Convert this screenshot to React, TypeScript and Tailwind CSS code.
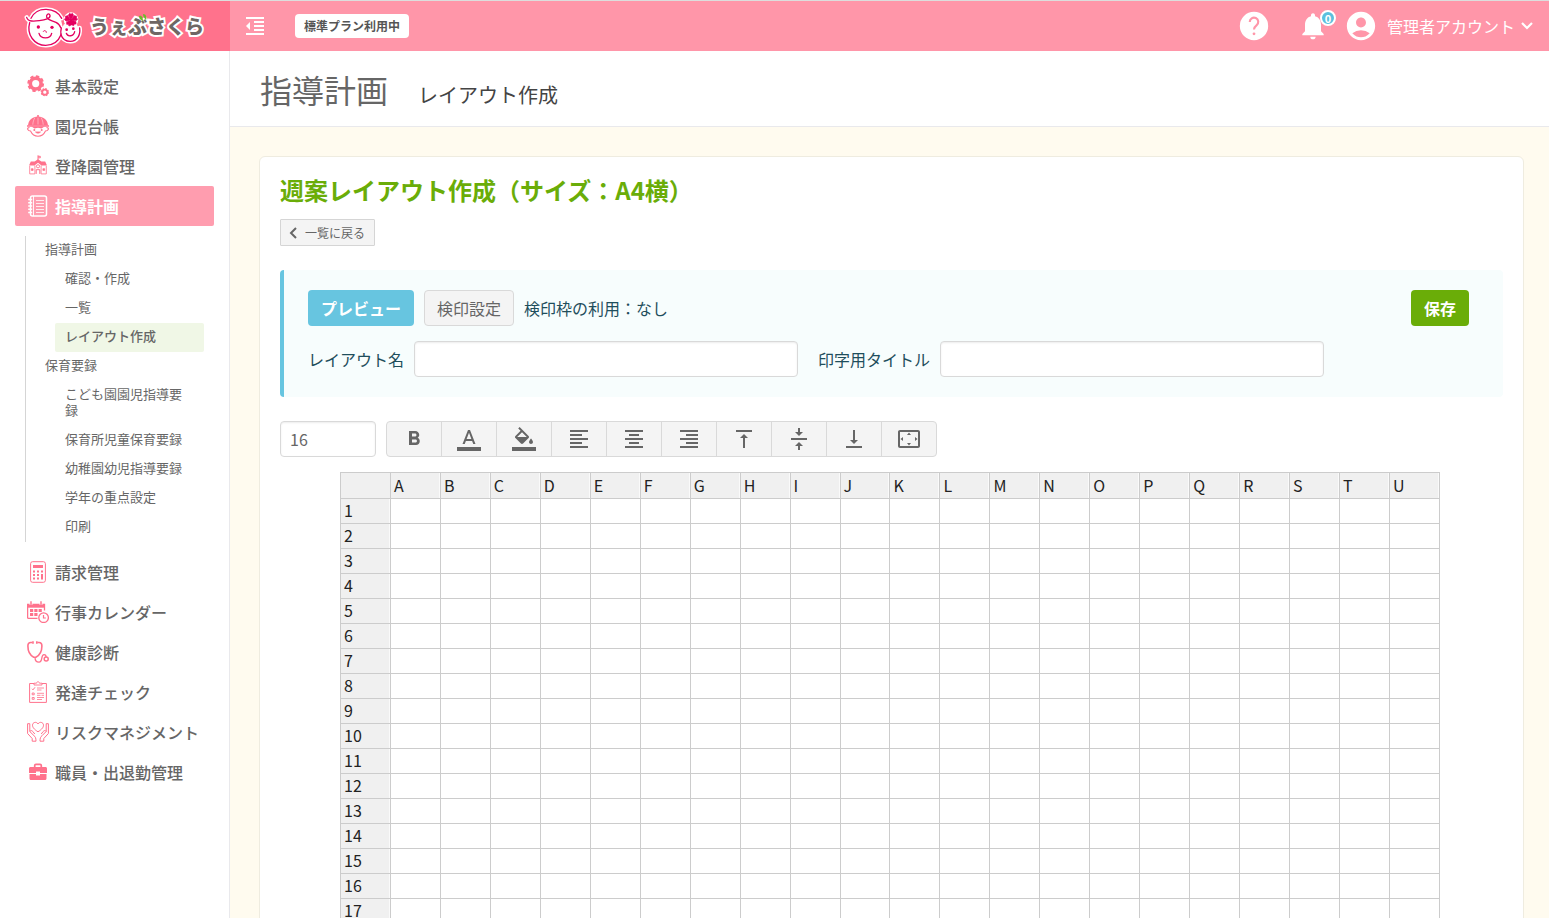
import { useState, type ReactNode } from 'react';
import {
  MdAccountCircle,
  MdFormatAlignCenter,
  MdFormatAlignLeft,
  MdFormatAlignRight,
  MdFormatBold,
  MdFormatIndentDecrease,
  MdNotifications,
  MdSettingsOverscan,
  MdVerticalAlignBottom,
  MdVerticalAlignCenter,
  MdVerticalAlignTop,
} from 'react-icons/md';

const COLUMNS = 'ABCDEFGHIJKLMNOPQRSTU'.split('');
const ROWS = Array.from({ length: 17 }, (_, i) => i + 1);

function MenuSvg({ children }: { children: ReactNode }) {
  return (
    <svg className="w-[22px] h-[22px] flex-shrink-0" viewBox="0 0 22 22" fill="none" stroke="currentColor" strokeWidth={1.3} aria-hidden="true">
      {children}
    </svg>
  );
}

const icons = {
  gears: (
    <MenuSvg>
      <circle cx="8.7" cy="8.6" r="5.4" strokeWidth="3.6" />
      <circle cx="8.7" cy="8.600" r="7.400" strokeWidth="2" strokeDasharray="3.300 2.511" />
      <circle cx="17.800" cy="17.200" r="2.600" strokeWidth="1.900" />
      <circle cx="17.800" cy="17.200" r="3.600" strokeWidth="1.100" strokeDasharray="1.600 1.230" />
    </MenuSvg>
  ),
  child: (
    <MenuSvg>
      <path d="M1 10.500C1.300 5 5.500 1.400 11 1.400s9.700 3.600 10 9.100z" fill="currentColor" stroke="none" />
      <path d="M11 0v2" strokeWidth="1.600" />
      <path d="M8 2.700c-1.500 2-2 4.500-2.200 7M14 2.700c1.500 2 2 4.500 2.200 7M11 2.500v7" stroke="#fff" strokeOpacity=".6" strokeWidth=".7" />
      <path d="M0 11h22" strokeWidth="1.500" />
      <path d="M2.500 12.500C.8 12.500.3 13.500.8 14.500c.5 1 1.500 1.500 2.700 1.500 1.500 3.200 4 5.200 7.500 5.200s6-2 7.500-5.200c1.200 0 2.200-.5 2.700-1.500.5-1 0-2-1.700-2" strokeWidth="1.100" />
      <path d="M4.500 11.500h13l-3 2-3.500-.8-3.500.8z" fill="currentColor" stroke="none" />
      <circle cx="7.300" cy="15" r="1" fill="currentColor" stroke="none" />
      <circle cx="14.700" cy="15" r="1" fill="currentColor" stroke="none" />
      <path d="M8.500 17c1.500 1.500 3.500 1.500 5 0z" fill="currentColor" strokeWidth=".8" />
    </MenuSvg>
  ),
  school: (
    <MenuSvg>
      <path d="M11 .3v5M11 1.300h2.300v1.500H11" strokeWidth="1" />
      <path d="M3.800 6.500h3.800L11 4.300l3.400 2.200h3.800l1.800 4h-5.500L11 7.800l-3.500 2.700H2z" fill="currentColor" stroke="none" />
      <path d="M2.700 11v7.900h5.200M19.300 11v7.900h-5.200M7.900 10.500v8.400M14.100 10.500v8.400" strokeWidth=".8" />
      <circle cx="11" cy="11.300" r="1.600" strokeWidth=".9" />
      <path d="M4.300 13.700h1.800v1.700H4.300zM15.900 13.700h1.800v1.700h-1.800z" fill="currentColor" strokeWidth=".7" />
      <path d="M9.200 18.900v-4.200h3.600v4.200" strokeWidth="1" />
    </MenuSvg>
  ),
  notebook: (
    <MenuSvg>
      <rect x="3.500" y="1" width="16" height="20" rx="2" strokeWidth="1.500" />
      <path d="M6.500 1v20" strokeWidth=".9" />
      <path d="M1.200 4.500h4M1.200 7.700h4M1.200 11h4M1.200 14.300h4M1.200 17.500h4" strokeWidth="1.400" />
      <path d="M9 5.500h8M9 8.500h8M9 11.500h8M9 14.500h8M9 17.500h8" strokeWidth=".8" />
    </MenuSvg>
  ),
  calculator: (
    <MenuSvg>
      <rect x="3.600" y=".7" width="14.800" height="20.600" rx="2" strokeWidth="1" />
      <path d="M6 4h10v3H6z" fill="currentColor" stroke="none" />
      <path d="M7 9.500v9M11 9.500v9" strokeWidth="2" strokeDasharray="2 1.500" />
      <path d="M15 9.500v2M15 13v5.500" strokeWidth="2" />
    </MenuSvg>
  ),
  calendar: (
    <MenuSvg>
      <path d="M10.500 17.400H1.500c-.6 0-.9-.4-.9-1V3.500h16.900v6" strokeWidth="1.300" />
      <path d="M0 3h18v3.700H0z" fill="currentColor" stroke="none" />
      <path d="M4 .5V4M14 .5V4" stroke="#fff" strokeWidth="2.800" />
      <path d="M4 .2V4.300M14 .2V4.300" strokeWidth="1.400" />
      <path d="M3 9.500h12M3 13.500h8" strokeWidth="3" strokeDasharray="3.200 1.100" />
      <circle cx="16.600" cy="16.700" r="4.800" fill="#fff" strokeWidth="1.300" />
      <path d="M16.500 14v3h2.300" strokeWidth="1.200" />
    </MenuSvg>
  ),
  stethoscope: (
    <MenuSvg>
      <path d="M5.500 1.500H3.800C1.600 1.500.9 3 .9 5c0 6 2.500 9.500 5.800 11.200h2.200C12.200 14.500 14.900 11 14.900 5c0-2-.7-3.500-2.900-3.500h-1.700" strokeWidth="1.600" />
      <path d="M6 .2v2.600M9.800.2v2.600" strokeWidth="1.600" />
      <path d="M8 16c0 3.500 1.500 5.200 4 5.200 4.200 0 1.500-7.500 5-7.500 1.500 0 2.100 1 2.100 2.500" strokeWidth="1.300" />
      <circle cx="19.200" cy="18" r="2" strokeWidth="1.500" />
    </MenuSvg>
  ),
  checklist: (
    <MenuSvg>
      <path d="M7 2.500H2.600v18.900h16.800V2.500H15" strokeWidth="1" />
      <path d="M7 4V2.200h2.500C9.800 1.200 10.300.7 11 .7s1.200.5 1.500 1.500H15V4z" strokeWidth=".9" />
      <path d="M5 7.800l1 1 2-2.500" strokeWidth="1" />
      <path d="M5.200 12h2v1.800h-2zM5.200 16.500h2v1.800h-2z" strokeWidth=".9" />
      <path d="M10 7h7M10 9h4.500M10 12.300h7M10 14.300h3.500M14.500 14.300H17M10 16.500h7M10 18.500h5" strokeWidth=".8" />
    </MenuSvg>
  ),
  care: (
    <MenuSvg>
      <path d="M11 10.800C7 8.300 5.500 6.200 5.500 4.200c0-3 4-4 5.500-1.200 1.500-2.800 5.500-1.800 5.500 1.200 0 2-1.500 4.100-5.500 6.600z" strokeWidth="1" />
      <path d="M.6 2.700h2.200v7.800l4.200 4.200c1.400 1 2 2.500 2 5.500H5.200v-2.700L.6 12.500z" strokeWidth="1" />
      <path d="M21.400 2.700h-2.200v7.800L15 14.700c-1.400 1-2 2.500-2 5.500h3.800v-2.700l4.600-5z" strokeWidth="1" />
      <path d="M3 10.500c.5-1.500 2-1 2.800 0l2 2.500M19 10.500c-.5-1.500-2-1-2.800 0l-2 2.500" strokeWidth="1" />
    </MenuSvg>
  ),
  briefcase: (
    <MenuSvg>
      <path d="M7.700 6V4.500c0-.8.500-1.200 1.300-1.200h4c.8 0 1.300.4 1.300 1.200V6" strokeWidth="1.700" />
      <path d="M3.500 6h15c.9 0 1.500.6 1.500 1.500V12h-7v-1.500H9V12H2V7.500C2 6.600 2.600 6 3.500 6zM2.500 13H9v1.500h4V13h6.500v4.500c0 .9-.6 1.500-1.500 1.500H4c-.9 0-1.500-.6-1.500-1.500z" fill="currentColor" stroke="none" />
    </MenuSvg>
  ),
};

const upperMenu = [
  { label: '基本設定', icon: icons.gears },
  { label: '園児台帳', icon: icons.child },
  { label: '登降園管理', icon: icons.school },
  { label: '指導計画', icon: icons.notebook, active: true },
];

const lowerMenu = [
  { label: '請求管理', icon: icons.calculator },
  { label: '行事カレンダー', icon: icons.calendar },
  { label: '健康診断', icon: icons.stethoscope },
  { label: '発達チェック', icon: icons.checklist },
  { label: 'リスクマネジメント', icon: icons.care },
  { label: '職員・出退勤管理', icon: icons.briefcase },
];

const subMenu = [
  { title: '指導計画', items: ['確認・作成', '一覧', 'レイアウト作成'] },
  { title: '保育要録', items: ['こども園園児指導要録', '保育所児童保育要録', '幼稚園幼児指導要録', '学年の重点設定', '印刷'] },
];

const tools = [
  { label: '太字', icon: <MdFormatBold size={24} /> },
  {
    label: '文字色',
    icon: (
      <svg className="w-6 h-6" viewBox="0 0 24 24" fill="currentColor" aria-hidden="true">
        <path d="M0 20h24v4H0z" />
        <path d="M11 3L5.500 17h2.250l1.120-3h6.250l1.120 3h2.250L13 3h-2zm-1.380 9L12 5.670 14.380 12H9.620z" />
      </svg>
    ),
  },
  {
    label: '背景色',
    icon: (
      <svg className="w-6 h-6" viewBox="0 0 24 24" fill="currentColor" aria-hidden="true">
        <path d="M16.560 8.940L7.620 0 6.210 1.410l2.380 2.380-5.150 5.150c-.59.59-.59 1.540 0 2.120l5.500 5.500c.29.29.68.44 1.060.44s.77-.15 1.060-.44l5.500-5.500c.59-.58.59-1.530 0-2.120zM5.210 10L10 5.210 14.790 10H5.210zM19 11.500s-2 2.170-2 3.500c0 1.100.9 2 2 2s2-.9 2-2c0-1.330-2-3.500-2-3.500z" />
        <path d="M0 20h24v4H0z" />
      </svg>
    ),
  },
  { label: '左揃え', icon: <MdFormatAlignLeft size={24} /> },
  { label: '中央揃え', icon: <MdFormatAlignCenter size={24} /> },
  { label: '右揃え', icon: <MdFormatAlignRight size={24} /> },
  { label: '上揃え', icon: <MdVerticalAlignTop size={24} /> },
  { label: '上下中央揃え', icon: <MdVerticalAlignCenter size={24} /> },
  { label: '下揃え', icon: <MdVerticalAlignBottom size={24} /> },
  { label: 'セル結合', icon: <MdSettingsOverscan size={24} /> },
];

function LogoMark() {
  const face = 'M89 66c-10 36 14 68 48 68 22 0 38-12 46-32 4 12 14 20 28 20 20 0 31-18 28-40';
  const hair = 'M80 50c4 14 22 12 38 10 18-2 34-7 32-16-2-8-12-4-10 5 3 10 18 11 28 16 8 4 12 9 14 16';
  const crown = 'M93 53c8-18 26-28 46-27 22 1 38 11 46 27';
  return (
    <svg className="w-[58px] h-[43px]" viewBox="72 13 174 129" fill="none" strokeLinecap="round" aria-hidden="true">
      <g stroke="#fff" strokeWidth="13">
        <path d={face} />
        <path d={crown} />
        <path d={hair} />
      </g>
      <ellipse cx="138" cy="80" rx="49" ry="54" fill="#fff" />
      <ellipse cx="211" cy="92" rx="27" ry="29" fill="#fff" />
      <circle cx="213" cy="57" r="22" fill="#fff" />
      <g stroke="#e4005f" strokeWidth="4">
        <path d={face} />
        <path d={crown} />
        <path d={hair} />
        <path d="M184 82c-2 8-2 14-1 20" />
        <path d="M117 98c5 18 34 18 38 0M199 98c4 11 22 10 25-5" />
        <path d="M130 92c2-4 9-3 9 3" strokeWidth="3" />
      </g>
      <g fill="#e4005f">
        <circle cx="115" cy="79" r="5" />
        <circle cx="156" cy="80" r="5" />
        <circle cx="200" cy="87" r="4" />
        <circle cx="220" cy="84" r="4" />
        <path
          d="M213 57l-8-13 4-6 4 3 4-3 4 6zM213 57l10-12 7 2-1 5 4 3-5 5zM213 57l15 6 0 7-5 0-2 5-7-3zM213 57l1 16-7 3-2-5-5 0 0-7zM213 57l-15 4-5-5 4-4-1-5 7-2z"
          stroke="#e4005f"
          strokeWidth="2"
        />
      </g>
    </svg>
  );
}

function MenuItem({ label, icon, active = false }: { label: string; icon: ReactNode; active?: boolean }) {
  return (
    <a
      href="#"
      className={`flex h-10 items-center gap-1.5 rounded-xs pl-3 text-base leading-6 ${
        active ? 'bg-[#ff9daf] font-bold text-white' : 'font-medium text-[#ff728c]'
      }`}
    >
      {icon}
      <span className={active ? 'text-white' : 'text-[#666]'}>{label}</span>
    </a>
  );
}

function Sidebar() {
  return (
    <nav className="w-[230px] flex-shrink-0 border-r border-[#e9e9ec] bg-white px-[15px] pt-[15px]">
      {upperMenu.map(item => (
        <MenuItem key={item.label} {...item} />
      ))}
      <div className="my-2.5 ml-2.5 mr-2.5 border-l border-[#d5d5d5] pl-[9px] text-[13px] leading-4 text-[#666]">
        {subMenu.map(group => (
          <div key={group.title}>
            <a href="#" className="block px-2.5 pt-[5px] pb-2">{group.title}</a>
            {group.items.map(item => (
              <a
                key={item}
                href="#"
                className={`ml-5 block rounded-xs px-2.5 pt-[5px] pb-2 ${item === 'レイアウト作成' ? 'bg-[#f0f7e6] font-medium' : ''}`}
              >
                {item}
              </a>
            ))}
          </div>
        ))}
      </div>
      {lowerMenu.map(item => (
        <MenuItem key={item.label} {...item} />
      ))}
    </nav>
  );
}

function Header() {
  return (
    <header className="flex h-[51px] flex-shrink-0 border-t border-[#ddd] bg-[#ff96a9] text-white">
      <a href="#" className="flex w-[230px] items-center bg-[#ff728c] pl-6">
        <LogoMark />
        <span className="relative ml-2 text-[19px] leading-6 font-black text-[#6f6764] [-webkit-text-stroke:4px_white] [paint-order:stroke_fill]">
          うぇぶさくら
          <svg className="absolute left-[49px] top-0 w-2 h-2" viewBox="0 0 8 8" fill="#6fb92c" aria-hidden="true">
            <path d="M0 2c3-1 4 2 4 5-3-1-4-3-4-5zM4 0c3 0 4 3 3 6C5 4 4 2 4 0z" />
          </svg>
        </span>
      </a>
      <div className="flex flex-1 items-center pl-[13px] pr-4">
        <button type="button" aria-label="メニューを閉じる">
          <MdFormatIndentDecrease size={24} />
        </button>
        <span className="ml-7 rounded-sm bg-white px-[9px] text-xs leading-6 font-bold text-[#555]">標準プラン利用中</span>
        <div className="ml-auto flex items-center">
          <button type="button" aria-label="ヘルプ">
            <svg className="h-[34px] w-[34px]" viewBox="0 0 24 24" fill="none" aria-hidden="true">
              <circle cx="12" cy="12" r="10" fill="currentColor" />
              <path d="M9 9.200a3 3 0 1 1 4.800 2.300c-1 .8-1.800 1.400-1.800 3" stroke="#ff96a9" strokeWidth="1.500" />
              <circle cx="12" cy="17.500" r="1" fill="#ff96a9" />
            </svg>
          </button>
          <button type="button" aria-label="お知らせ" className="relative ml-[26px]">
            <MdNotifications size={32} />
            <span className="absolute -right-[7px] top-0 h-4 w-4 rounded-full border-2 border-white bg-[#5bc0de] text-center text-[11px] leading-3 font-bold">0</span>
          </button>
          <button type="button" className="ml-[15px] flex items-center text-base">
            <MdAccountCircle size={34} />
            <span className="ml-[9px]">管理者アカウント</span>
            <svg className="ml-1.5 h-2 w-3" viewBox="0 0 12 8" fill="none" stroke="currentColor" strokeWidth={2.200} aria-hidden="true">
              <path d="M1 1l5 5 5-5" />
            </svg>
          </button>
        </div>
      </div>
    </header>
  );
}

function Toolbar() {
  return (
    <div className="mt-6 flex gap-2.5">
      <input
        type="text"
        aria-label="文字サイズ"
        defaultValue="16"
        className="h-9 w-24 rounded-sm border border-[#d9d9d9] bg-white px-[9px] text-base text-[#666] shadow-[inset_0_1px_2px_rgba(0,0,0,0.08)]"
      />
      <div className="flex h-9 overflow-hidden rounded-sm border border-[#d9d9d9] bg-[#f4f4f4] text-[#666]">
        {tools.map((tool, i) => (
          <button
            key={tool.label}
            type="button"
            aria-label={tool.label}
            className={`flex items-center justify-center ${i === 0 ? 'w-[54px]' : 'w-[55px] border-l border-[#d9d9d9]'}`}
          >
            {tool.icon}
          </button>
        ))}
      </div>
    </div>
  );
}

function Sheet() {
  const head = 'border border-[#ccc] bg-[#f0f0f0] p-0 pl-[3px] text-left align-top font-normal shadow-[inset_-1px_0_0_#fafafa]';
  return (
    <table className="mt-[15px] ml-[60px] w-[1100px] table-fixed border-collapse text-base text-[#222]">
      <thead>
        <tr className="h-[26px] leading-6">
          <th className="border border-[#ccc] bg-[#f0f0f0]" aria-label="行番号" />
          {COLUMNS.map(col => (
            <th key={col} scope="col" className={head}>{col}</th>
          ))}
        </tr>
      </thead>
      <tbody>
        {ROWS.map(row => (
          <tr key={row} className="h-[25px] leading-[22px]">
            <th scope="row" className={head}>{row}</th>
            {COLUMNS.map(col => (
              <td key={col} className="border border-[#ccc] p-0" />
            ))}
          </tr>
        ))}
      </tbody>
    </table>
  );
}

export default function App() {
  const [layoutName, setLayoutName] = useState('');
  const [printTitle, setPrintTitle] = useState('');
  const field = 'ml-2.5 h-9 w-96 rounded-sm border border-[#d9d9d9] bg-white px-2.5 text-[#666] shadow-[inset_0_1px_2px_rgba(0,0,0,0.08)]';

  return (
    <div className="flex h-screen flex-col overflow-hidden bg-[#fffbef] font-['Noto_Sans_CJK_JP',sans-serif] text-base text-[#555]">
      <Header />
      <div className="flex min-h-0 flex-1">
        <Sidebar />
        <main className="min-w-0 flex-1 overflow-y-auto [scrollbar-width:none]">
          <div className="flex h-[76px] items-baseline border-b border-[#e9e9ec] bg-white pt-[18px] pl-[30px]">
            <h1 className="text-[32px] leading-10 text-[#666]">指導計画</h1>
            <p className="ml-[30px] text-xl leading-8 text-[#444]">レイアウト作成</p>
          </div>
          <section className="mt-[29px] mr-[25px] ml-[29px] rounded-md border border-[#efece0] bg-white px-5 pt-[15px] pb-5">
            <h2 className="text-2xl leading-9 font-bold text-[#6aad08]">週案レイアウト作成（サイズ：A4横）</h2>
            <a href="#" className="mt-[11px] flex h-[27px] w-[95px] items-center rounded-[1px] border border-[#d5d5d5] bg-[#f4f4f4] pl-2 text-xs text-[#666]">
              <svg className="mr-2 h-3 w-2" viewBox="0 0 8 12" fill="none" stroke="currentColor" strokeWidth={2} aria-hidden="true">
                <path d="M7 1L2 6l5 5" />
              </svg>
              一覧に戻る
            </a>
            <form className="mt-6 rounded-sm border-l-4 border-[#67c5e0] bg-[#f7fdfd] py-5 pr-[34px] pl-6 text-[#1f4e5c]" onSubmit={e => e.preventDefault()}>
              <div className="flex h-9 items-center gap-2.5">
                <button type="button" className="h-9 rounded-sm bg-[#67c5e0] px-[13px] font-bold text-white">プレビュー</button>
                <button type="button" className="h-9 rounded-sm border border-[#d9d9d9] bg-[#f4f4f4] px-3 text-[#666]">検印設定</button>
                <span>検印枠の利用：なし</span>
                <button type="submit" className="ml-auto h-9 rounded-sm bg-[#6aad08] px-[13px] font-bold text-white">保存</button>
              </div>
              <div className="mt-[15px] flex items-center">
                <label htmlFor="layout-name">レイアウト名</label>
                <input id="layout-name" type="text" value={layoutName} onChange={e => setLayoutName(e.target.value)} className={field} />
                <label htmlFor="print-title" className="ml-5">印字用タイトル</label>
                <input id="print-title" type="text" value={printTitle} onChange={e => setPrintTitle(e.target.value)} className={field} />
              </div>
            </form>
            <Toolbar />
            <Sheet />
          </section>
        </main>
      </div>
    </div>
  );
}
